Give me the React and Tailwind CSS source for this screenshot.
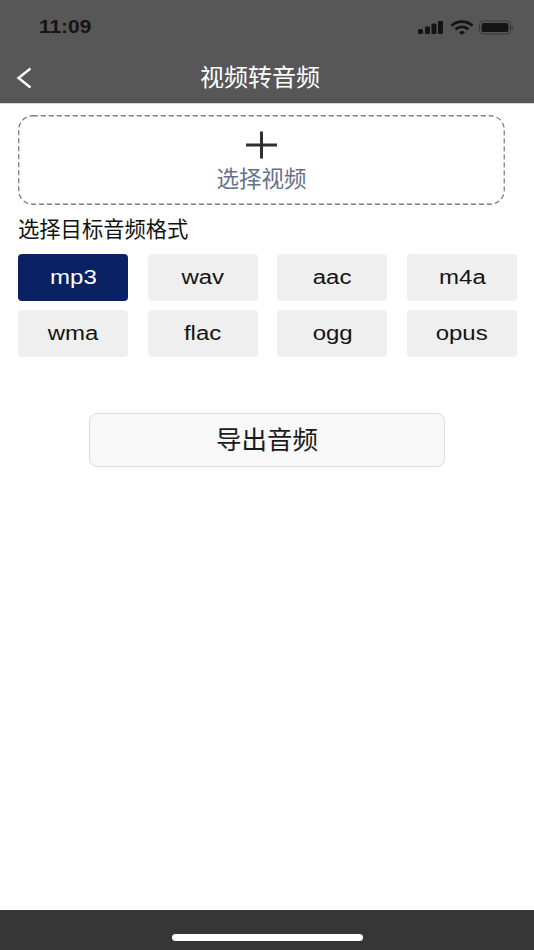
const formats = ['mp3', 'wav', 'aac', 'm4a', 'wma', 'flac', 'ogg', 'opus']

const cjk = "font-['Liberation_Sans','Noto_Sans_CJK_SC',sans-serif]"

function StatusIcons() {
  return (
    <svg width="95" height="15" viewBox="0 0 95 15" fill="#141414">
      {/* signal */}
      <rect x="0" y="9" width="5" height="5" rx="1.5" />
      <rect x="7" y="6.5" width="5" height="7.5" rx="1" />
      <rect x="13.5" y="3.5" width="5" height="10.5" rx="1" />
      <rect x="20" y="1" width="5" height="13" rx="1" />
      {/* wifi */}
      <path d="M33.5 5.8a15.5 15.5 0 0 1 21 0" fill="none" stroke="#141414" strokeWidth="2.8" />
      <path d="M37.5 9.4a9.6 9.6 0 0 1 13 0" fill="none" stroke="#141414" strokeWidth="2.8" />
      <path d="M41 12.4a4.4 4.4 0 0 1 6 0L44 15z" />
      {/* battery */}
      <rect x="61.5" y="1" width="31" height="13" rx="3.5" fill="none" stroke="#141414" strokeOpacity="0.45" />
      <rect x="63.5" y="3" width="27" height="9" rx="2" />
      <rect x="93.5" y="5.5" width="1.5" height="4" rx="0.7" fillOpacity="0.4" />
    </svg>
  )
}

export default function App() {
  return (
    <div className={`flex h-[950px] w-[534px] flex-col bg-white ${cjk}`}>
      <div className="h-[104px] shrink-0 border-b border-[#d4d4d4] bg-[#575757]">
        <div className="flex h-[54px] items-center justify-between pl-[39px] pr-[21px]">
          <span className="origin-left scale-x-[1.1] text-[19px] font-bold text-[#141414]">11:09</span>
          <StatusIcons />
        </div>
        <div className="relative flex h-[49px] items-center justify-center pr-[14px]">
          <svg className="absolute left-[15px] top-[12px]" width="19" height="24" viewBox="0 0 19 24" fill="none">
            <path d="M15.5 2.5L3.5 12l12 9.5" stroke="#fff" strokeWidth="2.4" />
          </svg>
          <span className="mt-[-2px] text-[24px] text-white">视频转音频</span>
        </div>
      </div>

      <div className="flex-1 pl-[18px] pr-[17px] pt-[11px]">
        <div className="relative flex h-[90px] w-[487px] flex-col items-center pt-[16px]">
          <svg className="absolute inset-0" width="487" height="90" viewBox="0 0 487 90" fill="none">
            <rect x="0.75" y="0.75" width="485.5" height="88.5" rx="14" stroke="#7c7c80" strokeWidth="1.3" strokeDasharray="5 3" />
          </svg>
          <svg width="31" height="28" viewBox="0 0 31 28" fill="none">
            <path d="M0 14h31M15.5 0.5v27" stroke="#2f2f2f" strokeWidth="3" />
          </svg>
          <span className="mt-[7px] text-[22.5px] leading-[28px] text-[#67708c]">选择视频</span>
        </div>

        <div className="mt-[12px] text-[21.3px] leading-[26px] text-[#111]">选择目标音频格式</div>

        <div className="mt-[11px] grid grid-cols-4 gap-x-[19.6px] gap-y-[9px]">
          {formats.map((f) => (
            <div
              key={f}
              className={`flex h-[47px] items-center justify-center rounded-[4px] pb-[2px] ${
                f === 'mp3' ? 'bg-[#0a2264] text-white' : 'bg-[#efefef] text-[#141414]'
              }`}
            >
              <span className="scale-x-[1.2] text-[20px]">{f}</span>
            </div>
          ))}
        </div>

        <div className="ml-[71px] mt-[56px] flex h-[54px] w-[356px] items-center justify-center rounded-[8px] border border-[#dcdcdc] bg-[#f8f8f8] text-[25.5px] text-[#1a1a1a]">
          导出音频
        </div>
      </div>

      <div className="flex h-[40px] shrink-0 justify-center bg-[#363636] pt-[24px]">
        <div className="h-[7px] w-[191px] rounded-full bg-white" />
      </div>
    </div>
  )
}
